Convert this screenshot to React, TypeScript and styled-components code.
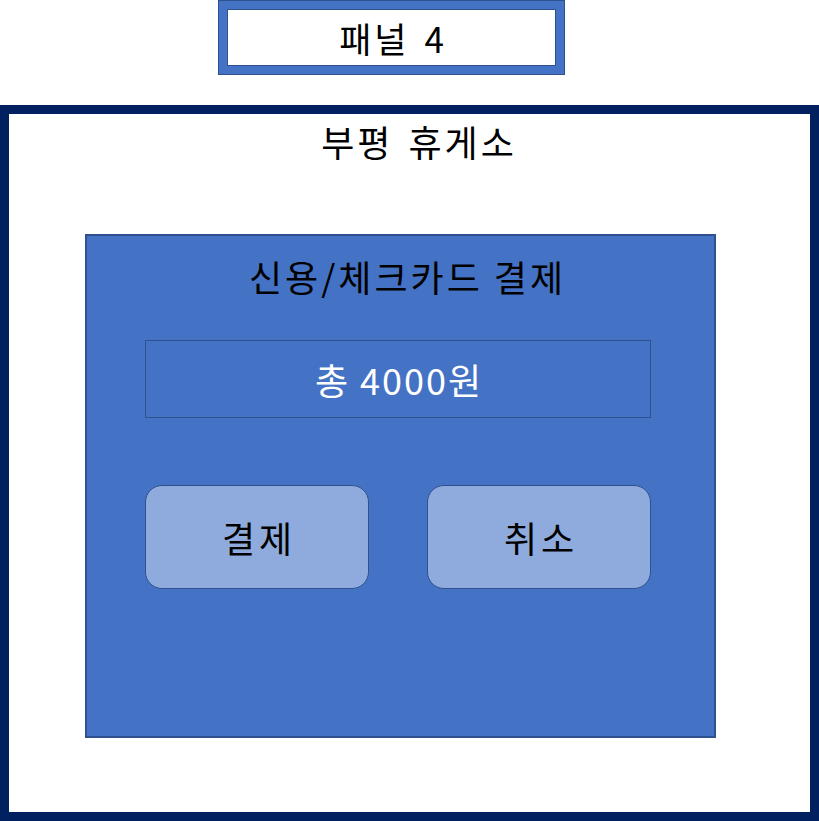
import React from 'react';
import styled, { createGlobalStyle } from 'styled-components';

const GlobalStyle = createGlobalStyle`
  html, body {
    margin: 0;
    padding: 0;
    background: #ffffff;
  }
  body {
    font-family: "Noto Sans CJK KR", "Noto Sans", sans-serif;
    color: #000;
  }
`;

const Page = styled.div`
  width: 819px;
  height: 821px;
  display: flex;
  flex-direction: column;
`;

const Tab = styled.div`
  width: 347px;
  height: 75px;
  margin-left: 218px;
  box-sizing: border-box;
  background: #4472c4;
  border: 1px solid #2f528f;
  padding: 8px;
`;

const TabInner = styled.div`
  height: 100%;
  box-sizing: border-box;
  background: #fff;
  border: 1px solid #2f528f;
  display: flex;
  align-items: center;
  justify-content: center;
  font-size: 35px;
  line-height: 1;
  letter-spacing: 3px;
  word-spacing: 4px;
  padding-left: 3px;
`;

const Frame = styled.div`
  margin-top: 30px;
  flex: 1;
  box-sizing: border-box;
  border: 9px solid #002060;
  display: flex;
  flex-direction: column;
`;

const FrameTitle = styled.div`
  padding: 6px 0 0 19px;
  text-align: center;
  font-size: 36px;
  line-height: 42px;
  letter-spacing: 3px;
  word-spacing: 4px;
`;

const Panel = styled.div`
  margin: 72px 0 0 76px;
  width: 631px;
  height: 504px;
  box-sizing: border-box;
  background: #4472c4;
  border: 2px solid #2f528f;
  padding: 0 63px 0 58px;
  display: flex;
  flex-direction: column;
`;

const PanelTitle = styled.div`
  margin-top: 18px;
  padding-left: 19px;
  text-align: center;
  font-size: 36px;
  line-height: 44px;
  letter-spacing: 3px;
`;

const Total = styled.div`
  margin-top: 42px;
  height: 78px;
  box-sizing: border-box;
  border: 1.5px solid #2f528f;
  color: #fff;
  display: flex;
  align-items: center;
  justify-content: center;
  font-size: 36px;
  letter-spacing: 2px;
  padding-left: 2px;
`;

const Actions = styled.div`
  margin-top: 67px;
  display: flex;
  justify-content: space-between;
`;

const Action = styled.button`
  width: 224px;
  height: 104px;
  box-sizing: border-box;
  background: #8faadc;
  border: 1.5px solid #2f528f;
  border-radius: 17px;
  font-family: inherit;
  font-size: 36px;
  letter-spacing: 4px;
  padding: 0 0 0 4px;
  color: #000;
  cursor: pointer;
`;

export default function App() {
  return (
    <>
      <GlobalStyle />
      <Page>
        <Tab>
          <TabInner>패널 4</TabInner>
        </Tab>
        <Frame>
          <FrameTitle>부평 휴게소</FrameTitle>
          <Panel>
            <PanelTitle>신용/체크카드 결제</PanelTitle>
            <Total>총 4000원</Total>
            <Actions>
              <Action>결제</Action>
              <Action>취소</Action>
            </Actions>
          </Panel>
        </Frame>
      </Page>
    </>
  );
}
